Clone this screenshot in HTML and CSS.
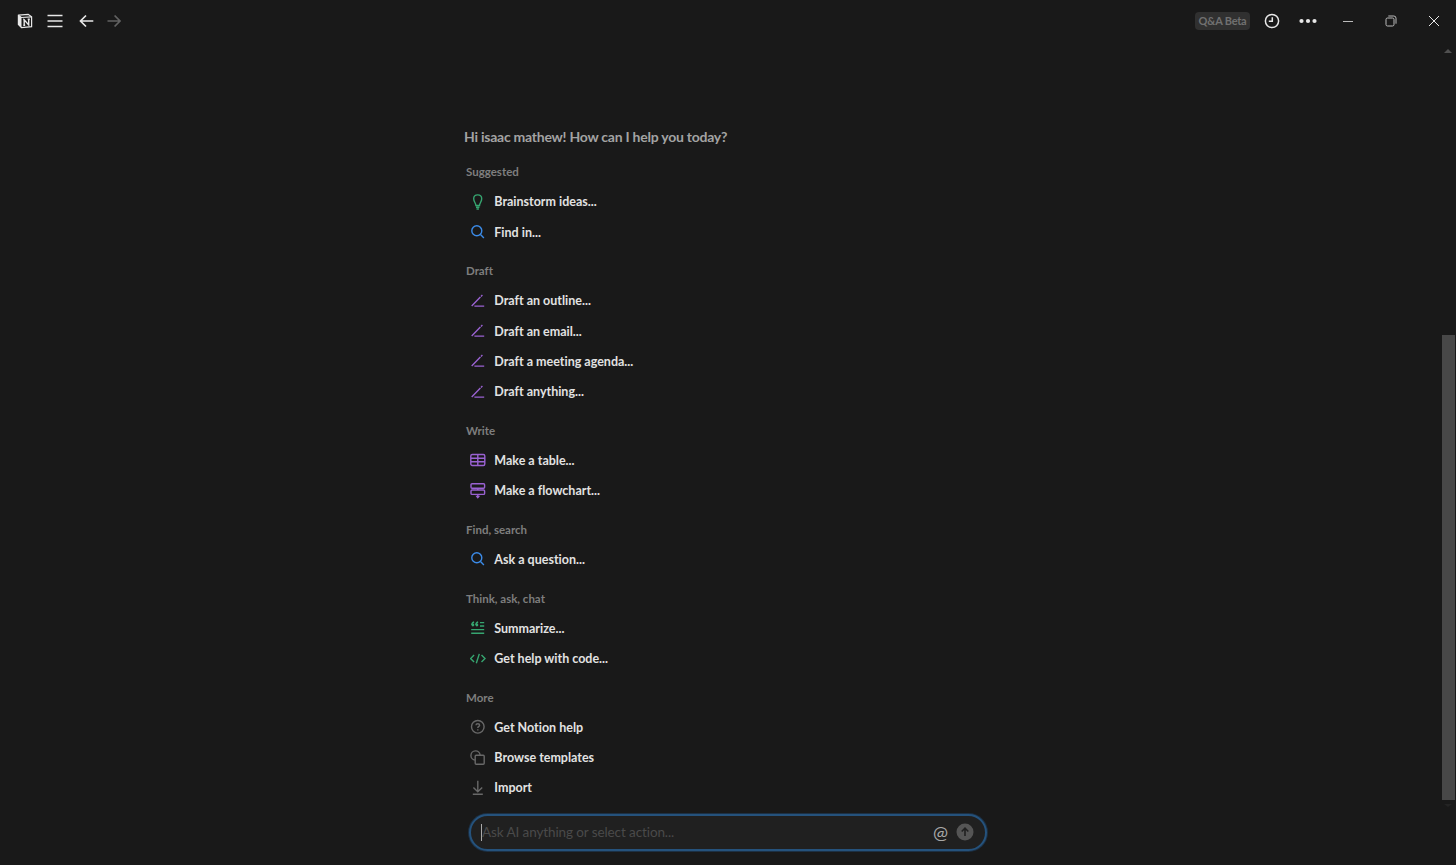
FILE: index.html
```html
<!DOCTYPE html>
<html lang="en">
<head>
    <meta charset="UTF-8">
    <meta name="viewport" content="width=device-width, initial-scale=1.0">
    <title>Q&amp;A</title>
    <link rel="stylesheet" href="styles.css">
</head>
<body>
    <!-- shared icons -->
    <svg class="defs">
        <symbol id="search" viewBox="0 0 16 16">
            <circle cx="6.8" cy="6.8" r="5"/><path d="M10.5 10.5L13.9 13.9"/>
        </symbol>
        <symbol id="pen" viewBox="0 0 16 16">
            <path d="M1.7 13.1L10.4 4M11 3.4L12.4 2M4.4 13.1H14.2"/>
        </symbol>
    </svg>

    <div class="topbar">
        <div class="left">
            <svg class="logo" viewBox="0 0 16 16">
                <path d="M1.4 2.2L11.2 1.3L14.6 3.7V13.7L4.5 14.6L1.4 11.4Z"/>
                <path class="fill" d="M1.4 2.2L4.5 4.4V14.6L1.4 11.4Z"/>
                <path d="M1.6 2.4L4.4 4.5L14.4 3.8"/>
                <path d="M6.2 6.6H7.8M7.2 12.3V6.8L11.7 11.9V6.3M6.3 12.3H8.2M10.7 6.3H12.8" class="n"/>
            </svg>
            <svg class="menu" viewBox="0 0 16 16"><path d="M0.5 2.5H15.5M0.5 8H15.5M0.5 13.5H15.5"/></svg>
            <svg class="back" viewBox="0 0 16 16"><path d="M14.3 8H1.5M7 2.5L1.5 8L7 13.5"/></svg>
            <svg class="forward" viewBox="0 0 16 16"><path d="M1.5 8H14M8.6 2.5L14 8L8.6 13.5"/></svg>
        </div>
        <div class="right">
            <span class="tag">Q&amp;A Beta</span>
            <svg class="clock" viewBox="0 0 16 16"><circle cx="8" cy="8" r="6.6"/><path d="M8.3 4.2V8.3H4.8"/></svg>
            <svg class="dots" viewBox="0 0 18 6"><circle cx="2.5" cy="3" r="2.1"/><circle cx="9" cy="3" r="2.1"/><circle cx="15.5" cy="3" r="2.1"/></svg>
            <svg class="win min" viewBox="0 0 12 12"><path d="M1 6.5H11"/></svg>
            <svg class="win max" viewBox="0 0 12 12"><rect x="1" y="3" width="8" height="8" rx="1.5"/><path d="M3.3 1H8.8Q11 1 11 3.2V8.7"/></svg>
            <svg class="win close" viewBox="0 0 12 12"><path d="M1 1L11 11M11 1L1 11"/></svg>
        </div>
    </div>

    <div class="main">
        <h1>Hi isaac mathew! How can I help you today?</h1>

        <div class="group">
            <h2>Suggested</h2>
            <ul>
                <li><svg class="green" viewBox="0 0 16 16"><path d="M5.9 11.5C5.9 9 3.7 7.8 3.7 4.8C3.7 2.2 5.4 0.9 7.7 0.9S11.7 2.2 11.7 4.8C11.7 7.8 9.5 9 9.5 11.5ZM6 13.2H9.4M6.5 15H8.9"/></svg>Brainstorm ideas...</li>
                <li><svg class="blue"><use href="#search"/></svg>Find in...</li>
            </ul>
        </div>

        <div class="group">
            <h2>Draft</h2>
            <ul>
                <li><svg class="purple"><use href="#pen"/></svg>Draft an outline...</li>
                <li><svg class="purple"><use href="#pen"/></svg>Draft an email...</li>
                <li><svg class="purple"><use href="#pen"/></svg>Draft a meeting agenda...</li>
                <li><svg class="purple"><use href="#pen"/></svg>Draft anything...</li>
            </ul>
        </div>

        <div class="group">
            <h2>Write</h2>
            <ul>
                <li><svg class="purple" viewBox="0 0 16 16"><rect x="0.8" y="2.5" width="14" height="11" rx="1.5"/><path d="M1 6.2H15M1 9.8H15M7.8 2.5V13.5"/></svg>Make a table...</li>
                <li><svg class="purple" viewBox="0 0 16 16"><rect x="1" y="0.8" width="13.6" height="4.4" rx="1"/><rect x="1" y="7" width="13.6" height="4.4" rx="1"/><path d="M7.8 5.2V7M7.8 11.4V13"/><path class="fill" d="M5.4 12.8H10.2L7.8 15.8Z"/></svg>Make a flowchart...</li>
            </ul>
        </div>

        <div class="group">
            <h2>Find, search</h2>
            <ul>
                <li><svg class="blue"><use href="#search"/></svg>Ask a question...</li>
            </ul>
        </div>

        <div class="group">
            <h2>Think, ask, chat</h2>
            <ul>
                <li><svg class="green" viewBox="0 0 16 16"><path d="M1.2 9.6H14.2M1.2 13.3H14.2M10 2.6H14.2M10 6H14.2"/><path d="M4.1 2Q1.9 2.5 1.9 4.9M8.1 2Q5.9 2.5 5.9 4.9"/><circle class="fill" cx="2.9" cy="5" r="1.4"/><circle class="fill" cx="6.9" cy="5" r="1.4"/></svg>Summarize...</li>
                <li><svg class="green" viewBox="0 0 16 16"><path d="M4.1 4.1L0.6 7.6L4.1 11.1M11.5 4.1L15 7.6L11.5 11.1M9.3 2.9L6.3 12.3"/></svg>Get help with code...</li>
            </ul>
        </div>

        <div class="group">
            <h2>More</h2>
            <ul>
                <li><svg class="gray" viewBox="0 0 16 16"><circle cx="7.8" cy="7.8" r="6.3"/><path d="M6 6.3Q6 4.7 7.8 4.7T9.6 6.2C9.6 7.4 7.8 7.4 7.8 8.9M7.8 10.2V11.4"/></svg>Get Notion help</li>
                <li><svg class="gray" viewBox="0 0 16 16"><rect x="5.2" y="5.2" width="9" height="9" rx="1"/><path d="M5.2 10.1A4.6 4.6 0 1 1 10.1 5.1"/></svg>Browse templates</li>
                <li><svg class="gray" viewBox="0 0 16 16"><path d="M7.8 0.8V11.6M3.4 7.4L7.8 11.8L12.2 7.4M2.8 14.2H12.8"/></svg>Import</li>
            </ul>
        </div>

        <div class="ask">
            <span class="caret"></span>
            <span class="placeholder">Ask AI anything or select action...</span>
            <span class="at">@</span>
            <svg class="send" viewBox="0 0 18 18"><circle cx="9" cy="9" r="8.5"/><path d="M9 13V5.2M5.7 8.5L9 5.2L12.3 8.5"/></svg>
        </div>
    </div>

    <div class="scrollbar">
        <span class="up"></span>
        <span class="thumb"></span>
        <span class="down"></span>
    </div>
</body>
</html>
```
FILE: styles.css
```css
*{
    box-sizing: border-box;
}
body,h1,h2,ul,li{
    margin: 0;padding: 0;
}
body{
    height: 865px;background: #191919;overflow: hidden;position: relative;
    font-family: Lato, "Liberation Sans", sans-serif;font-variant-ligatures: none;
}
svg{
    display: block;flex: none;fill: none;stroke: currentColor;
}
.defs{
    position: absolute;width: 0;height: 0;
}
.fill{
    fill: currentColor;stroke: none;
}

/* top bar */
.topbar{
    height: 42px;padding: 0 16px 0 17px;display: flex;justify-content: space-between;align-items: center;
    color: #e8e8e8;
}
.left,.right{
    display: flex;align-items: center;
}
.logo{
    width: 16px;height: 16px;stroke-width: 1.2;
}
.logo .n{
    stroke-width: 1.4;
}
.menu{
    width: 16px;height: 16px;margin-left: 14px;stroke-width: 1.5;
}
.back,.forward{
    width: 16px;height: 16px;stroke-width: 1.7;
}
.back{
    margin-left: 16px;
}
.forward{
    margin-left: 11px;color: #626262;
}
.tag{
    width: 55px;height: 18px;line-height: 18px;border-radius: 4px;background: #303030;color: #707070;
    font-size: 11px;font-weight: 700;letter-spacing: -0.25px;text-align: center;white-space: nowrap;
}
.clock{
    width: 16px;height: 16px;margin-left: 14px;stroke-width: 1.5;
}
.dots{
    width: 18px;height: 6px;margin-left: 19px;fill: currentColor;stroke: none;
}
.win{
    width: 12px;height: 12px;stroke-width: 1;
}
.min{
    margin-left: 25px;color: #bbb;
}
.max{
    margin-left: 31px;color: #bbb;
}
.close{
    margin-left: 31px;
}

/* actions */
.main{
    width: 523px;margin-left: 464px;padding-top: 84px;
}
h1{
    height: 32.4px;line-height: 22px;color: #a3a3a3;font-size: 14px;font-weight: 700;letter-spacing: -0.24px;
}
.group{
    padding: 0 0 10.2px 2px;
}
h2{
    height: 28.2px;line-height: 28px;color: #7e7e7e;font-size: 11.5px;font-weight: 700;
}
ul{
    list-style: none;
}
li{
    height: 30.33px;padding-left: 4px;display: flex;align-items: center;
    color: #e2e2e2;font-size: 12.5px;font-weight: 700;
}
li svg{
    width: 16px;height: 16px;margin-right: 8.3px;stroke-width: 1.4;
}
.green{
    color: #36a570;
}
.blue{
    color: #3b8be8;
}
.purple{
    color: #9a62d2;
}
.gray{
    color: #686868;
}

/* input */
.ask{
    width: 518px;height: 37px;margin: 0.6px 0 0 5px;padding: 0 11px 0 10px;display: flex;align-items: center;
    border: 2px solid #25527c;border-radius: 19px;background: #202020;box-shadow: 0 0 0 1px #1c3044;
}
.caret{
    width: 1px;height: 17px;background: #aaa;
}
.placeholder{
    flex: 1;color: #4a4a4a;font-size: 13.5px;letter-spacing: -0.1px;
}
.at{
    color: #a8a8a8;font-size: 18px;line-height: 18px;
}
.send{
    width: 18px;height: 18px;margin-left: 8px;stroke: #202020;stroke-width: 1.6;
}
.send circle{
    fill: #555;stroke: none;
}

/* scrollbar */
.scrollbar{
    position: absolute;top: 49px;right: 1px;width: 14px;height: 762px;
    display: flex;flex-direction: column;align-items: center;
}
.up{
    border: 4px solid transparent;border-top: 0;border-bottom: 4px solid #505050;
}
.thumb{
    width: 13px;height: 465px;margin-top: 282px;background: #484848;
}
.down{
    margin-top: 4px;border: 4px solid transparent;border-bottom: 0;border-top: 3px solid #242424;
}
```
